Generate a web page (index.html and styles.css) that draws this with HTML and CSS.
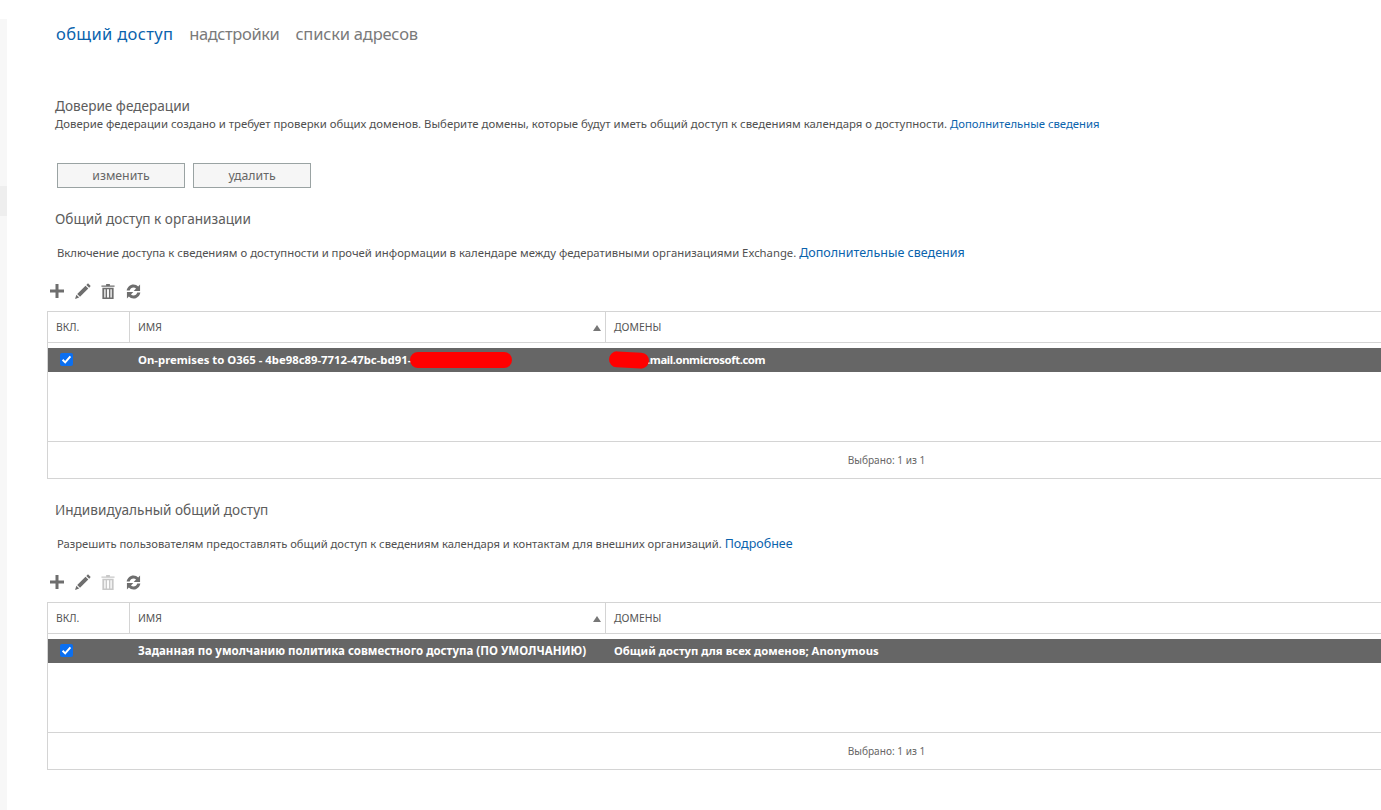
FILE: index.html
```html
<!DOCTYPE html>
<html lang="ru">
<head>
<meta charset="utf-8">
<title>общий доступ</title>
<link rel="stylesheet" href="styles.css">
</head>
<body>
<div class="page">
  <aside class="rail"><div class="rail-item"></div></aside>
  <main class="main">
    <nav class="tabs">
      <a class="tab active">общий доступ</a>
      <a class="tab t2">надстройки</a>
      <a class="tab t3">списки адресов</a>
    </nav>
    <section class="trust">
      <h2 class="title">Доверие федерации</h2>
      <p class="desc">Доверие федерации создано и требует проверки общих доменов. Выберите домены, которые будут иметь общий доступ к сведениям календаря о доступности. <a class="link">Дополнительные сведения</a></p>
      <div class="buttons">
        <button class="btn btn-change">изменить</button>
        <button class="btn btn-delete">удалить</button>
      </div>
    </section>
    <section class="block">
      <h2 class="title">Общий доступ к организации</h2>
      <p class="intro">Включение доступа к сведениям о доступности и прочей информации в календаре между федеративными организациями Exchange. <a class="link large">Дополнительные сведения</a></p>
      <div class="toolbar">
        <svg class="ic ic-plus" viewBox="0 0 16 16"><path d="M6.5 1h3v5.5H15v3H9.5V15h-3V9.500H1v-3h5.500z"/></svg>
        <svg class="ic ic-pen" viewBox="0 0 16 16"><path d="M13 .3l2.700 2.700-1.500 1.700-2.900-2.800zM10.500 2.700l2.800 2.800-8.300 8.300-2.800-2.800zM1.400 11.800l2.800 2.800L0 16z"/></svg>
        <svg class="ic ic-trash" viewBox="0 0 14 16"><path d="M5 0h4v1.500h5V3H0V1.500h5zM1 4h12v12H1zm2 1.500V14.500h1.400V5.500zm3 0V14.500h2V5.500zm3.600 0V14.500H11V5.500z" fill-rule="evenodd"/></svg>
        <svg class="ic ic-sync" viewBox="0 0 16 16"><path d="M8 .5c2 0 3.700.8 5 2.100L15 .6V7.400H8.200l2.500-2.500C10 4.200 9 3.800 8 3.800 6.100 3.800 4.500 5.100 4 7H.7C1.300 3.300 4.300.5 8 .5zM1 8.600h6.800l-2.500 2.500c.7.700 1.700 1.100 2.700 1.100 1.900 0 3.500-1.300 4-3.200h3.300c-.6 3.700-3.600 6.500-7.300 6.500-2 0-3.700-.8-5-2.100l-2 2z"/></svg>
      </div>
      <div class="grid">
        <div class="head">
          <div class="cell c-on">ВКЛ.</div>
          <div class="cell c-name">ИМЯ<span class="sort"></span></div>
          <div class="cell c-dom">ДОМЕНЫ</div>
        </div>
        <div class="rows">
          <div class="row">
            <div class="c-check"><span class="check"><svg viewBox="0 0 13 13"><path d="M2.600 6.800l2.600 2.600 5.200-6" /></svg></span></div>
            <div class="c-val1">On-premises to O365 - 4be98c89-7712-47bc-bd91-<span class="redact r1"></span></div>
            <div class="c-val2"><span class="redact r2"></span><span class="dom-text">.mail.onmicrosoft.com</span></div>
          </div>
        </div>
        <div class="foot">Выбрано: 1 из 1</div>
      </div>
    </section>
    <section class="block second">
      <h2 class="title">Индивидуальный общий доступ</h2>
      <p class="intro">Разрешить пользователям предоставлять общий доступ к сведениям календаря и контактам для внешних организаций. <a class="link large">Подробнее</a></p>
      <div class="toolbar">
        <svg class="ic ic-plus" viewBox="0 0 16 16"><path d="M6.5 1h3v5.5H15v3H9.5V15h-3V9.500H1v-3h5.500z"/></svg>
        <svg class="ic ic-pen" viewBox="0 0 16 16"><path d="M13 .3l2.700 2.700-1.500 1.700-2.900-2.800zM10.500 2.700l2.800 2.800-8.300 8.300-2.800-2.800zM1.400 11.800l2.800 2.800L0 16z"/></svg>
        <svg class="ic ic-trash off" viewBox="0 0 14 16"><path d="M5 0h4v1.500h5V3H0V1.500h5zM1 4h12v12H1zm2 1.500V14.500h1.400V5.500zm3 0V14.500h2V5.500zm3.600 0V14.500H11V5.500z" fill-rule="evenodd"/></svg>
        <svg class="ic ic-sync" viewBox="0 0 16 16"><path d="M8 .5c2 0 3.700.8 5 2.100L15 .6V7.400H8.200l2.500-2.500C10 4.200 9 3.800 8 3.800 6.100 3.800 4.500 5.100 4 7H.7C1.300 3.300 4.300.5 8 .5zM1 8.600h6.800l-2.500 2.500c.7.700 1.700 1.100 2.700 1.100 1.900 0 3.500-1.300 4-3.200h3.300c-.6 3.700-3.600 6.500-7.300 6.500-2 0-3.700-.8-5-2.100l-2 2z"/></svg>
      </div>
      <div class="grid">
        <div class="head">
          <div class="cell c-on">ВКЛ.</div>
          <div class="cell c-name">ИМЯ<span class="sort"></span></div>
          <div class="cell c-dom">ДОМЕНЫ</div>
        </div>
        <div class="rows">
          <div class="row cyr">
            <div class="c-check"><span class="check"><svg viewBox="0 0 13 13"><path d="M2.600 6.800l2.600 2.600 5.200-6" /></svg></span></div>
            <div class="c-val1">Заданная по умолчанию политика совместного доступа (ПО УМОЛЧАНИЮ)</div>
            <div class="c-val2">Общий доступ для всех доменов; Anonymous</div>
          </div>
        </div>
        <div class="foot">Выбрано: 1 из 1</div>
      </div>
    </section>
  </main>
</div>
</body>
</html>
```
FILE: styles.css
```css
* { box-sizing: border-box; }
html, body { margin: 0; padding: 0; height: 100%; overflow: hidden; background: #fff; }
body { font-family: "Noto Sans", "Open Sans", sans-serif; color: #555; }
.page { display: flex; width: 1381px; height: 810px; overflow: hidden; }
.rail { width: 7px; flex: none; margin-top: 19px; background: #f7f7f7; padding-top: 167px; }
.rail-item { height: 30px; background: #eeeeee; }
.main { flex: none; width: 1374px; padding-left: 40px; }
.tabs { display: flex; gap: 16px; padding: 21px 0 0 9px; height: 46px; font-size: 16.5px; line-height: 26px; color: #7a7a7a; }
.tab.active { color: #0a63ad; letter-spacing: 0.33px; }
.tab.t2 { letter-spacing: -0.4px; }
.tab.t3 { letter-spacing: -0.2px; }
.trust { padding: 51px 0 0 8px; }
.title { margin: 0; font-weight: 400; font-size: 13.6px; line-height: 18px; color: #5c5c5c; }
.desc { margin: 1px 0 0; font-size: 11.39px; line-height: 16px; color: #505050; white-space: nowrap; }
.link { color: #0a63ad; }
.desc .link { font-size: 11.3px; }
.intro .link.large { font-size: 12.5px; }
.buttons { display: flex; gap: 8px; margin: 31px 0 0 2px; }
.btn { height: 25px; border: 1px solid #9aa3a3; background: #f6f6f6; font: 12.300px "Noto Sans", sans-serif; color: #666; padding: 0; }
.btn-change { width: 128px; }
.btn-delete { width: 118px; }
.block { margin-top: 22px; }
.block.second { margin-top: 22px; }
.block .title { margin-left: 8px; }
.intro { margin: 16px 0 0 10px; font-size: 11.32px; line-height: 18px; color: #505050; white-space: nowrap; }
.second .intro { font-size: 11.24px; }
.toolbar { display: flex; align-items: center; height: 22px; margin: 18px 0 0 2px; }
.ic { fill: #6e6e6e; display: block; }
.ic-plus { width: 16px; height: 16px; margin-right: 10px; }
.ic-pen { width: 16px; height: 16px; margin-right: 10px; }
.ic-trash { width: 14px; height: 15px; margin-right: 11px; }
.ic-trash.off { fill: #c8c8c8; }
.ic-sync { width: 15px; height: 15px; }
.grid { margin-top: 9px; width: 1677px; border: 1px solid #d4d4d4; height: 168px; display: flex; flex-direction: column; }
.head { display: flex; height: 31px; border-bottom: 1px solid #d4d4d4; font-size: 10.400px; color: #555; flex: none; }
.cell { display: flex; align-items: center; padding-left: 8px; position: relative; }
.c-on { width: 82px; border-right: 1px solid #d4d4d4; }
.c-name { width: 476px; border-right: 1px solid #d4d4d4; }
.c-dom { flex: 1; }
.sort { position: absolute; right: 4px; top: 13px; border-left: 4.500px solid transparent; border-right: 4.500px solid transparent; border-bottom: 6px solid #777; }
.rows { flex: 1; padding-top: 5px; border-bottom: 1px solid #d4d4d4; }
.row { display: flex; align-items: center; height: 24px; background: #666; color: #fff; font-weight: 700; font-size: 11.350px; white-space: nowrap; }
.row.cyr .c-val1 { font-size: 11.500px; }
.row.cyr .c-val2 { font-size: 11.300px; }
.row.cyr .c-val1, .row.cyr .c-val2 { position: relative; top: -1px; }
.c-check { width: 82px; padding-left: 12px; display: flex; }
.check { width: 13px; height: 13px; border-radius: 2px; background: #0b6ff0; display: block; margin-top: -2px; }
.check svg { display: block; width: 13px; height: 13px; fill: none; stroke: #fff; stroke-width: 2; }
.c-val1 { width: 476px; padding-left: 8px; }
.c-val2 { flex: 1; padding-left: 8px; }
.dom-text { letter-spacing: -0.42px; }
.redact { display: inline-block; background: #ff0000; vertical-align: middle; }
.r1 { width: 102px; height: 16px; border-radius: 8px; margin-left: -1px; }
.r2 { width: 40px; height: 16px; border-radius: 8px; margin-left: -5px; margin-right: -2px; transform: rotate(3deg); }
.foot { height: 36px; flex: none; display: flex; align-items: center; justify-content: center; padding-left: 2px; font-size: 10.100px; color: #666; }
```
